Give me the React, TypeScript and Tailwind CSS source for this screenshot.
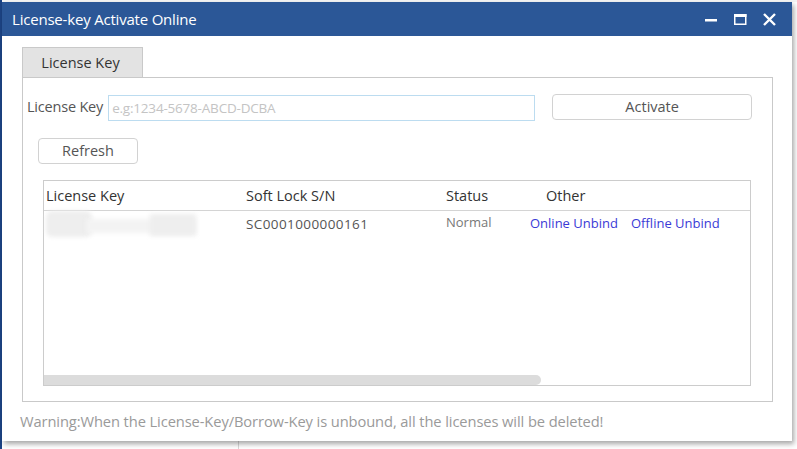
import React from 'react';

const FONT = { fontFamily: '"Open Sans", "Noto Sans", sans-serif' };

const COLUMNS = [
  { label: 'License Key', w: 'w-[200px]' },
  { label: 'Soft Lock S/N', w: 'w-[200px]' },
  { label: 'Status', w: 'w-[100px]' },
  { label: 'Other', w: 'w-[160px]' },
];

function TitleBar() {
  return (
    <div className="h-[34px] bg-[#2b5797] flex items-center justify-between pl-[10px] pr-[16px]">
      <span className="text-white text-[15px] tracking-[-0.2px]">License-key Activate Online</span>
      <div className="flex items-center gap-[16px]">
        <svg width="13" height="13" viewBox="0 0 13 13">
          <rect x="0" y="6" width="12" height="2.5" fill="#fff" />
        </svg>
        <svg width="13" height="13" viewBox="0 0 13 13">
          <rect x="0.75" y="1.75" width="11" height="9.5" fill="none" stroke="#fff" strokeWidth="1.5" />
          <rect x="0" y="1" width="12.5" height="3" fill="#fff" />
        </svg>
        <svg width="13" height="13" viewBox="0 0 13 13">
          <path d="M1 1 L12 12 M12 1 L1 12" stroke="#fff" strokeWidth="2.4" />
        </svg>
      </div>
    </div>
  );
}

function LicenseTable() {
  return (
    <div className="ml-[20px] mt-[16px] w-[708px] h-[206px] border border-[#cccccc] flex flex-col">
      <div className="h-[30px] flex items-center border-b border-[#d4d4d4] pl-[2px] text-[14.5px] text-[#333]">
        {COLUMNS.map(c => (
          <div key={c.label} className={c.w}>{c.label}</div>
        ))}
      </div>
      <div className="h-[26px] flex items-center pl-[2px] text-[13px]">
        <div className="w-[200px] h-[26px] relative">
          <div className="absolute left-[0px] top-[0px] w-[46px] h-[26px] bg-[#eeeeee] blur-[2px] rounded-[6px]" />
          <div className="absolute left-[40px] top-[8px] w-[110px] h-[14px] bg-[#f3f3f3] blur-[2px]" />
          <div className="absolute left-[104px] top-[3px] w-[46px] h-[22px] bg-[#eeeeee] blur-[2px]" />
        </div>
        <div className="w-[200px] text-[#555] text-[13.5px] tracking-[0.4px]">SC0001000000161</div>
        <div className="w-[84px] text-[#777] -mt-[3px]">Normal</div>
        <div className="w-[101px] text-[#3a3ad6]">Online Unbind</div>
        <div className="text-[#3a3ad6]">Offline Unbind</div>
      </div>
      <div className="flex-1" />
      <div className="h-[10px] w-[497px] bg-[#dcdcdc] rounded-r-[5px]" />
    </div>
  );
}

export default function App() {
  return (
    <div className="w-[797px] h-[449px] relative overflow-hidden bg-white" style={FONT}>
      {/* desktop behind */}
      <div className="absolute left-0 top-0 w-[2px] h-[449px] bg-[#1c4384]" />
      <div className="absolute left-[238px] top-0 w-px h-[449px] bg-[#d8d8d8]" />
      <div className="absolute left-[2px] top-0 w-[795px] h-[2px] bg-[#f4f4f4]" />

      {/* window */}
      <div className="absolute left-[2px] top-[2px] w-[790px] h-[439px] bg-white flex flex-col shadow-[2px_3px_5px_rgba(0,0,0,0.35)]">
        <TitleBar />
        <div className="flex flex-col pl-[20px]">
          <div className="mt-[11px] w-[121px] h-[30px] bg-[#e3e3e3] border border-[#c9c9c9] border-b-0 flex items-center justify-center text-[14.5px] text-[#333] pr-[4px]">
            License Key
          </div>
          <div className="w-[751px] h-[325px] border border-[#c9c9c9] flex flex-col">
            <div className="mt-[15px] flex items-center">
              <span className="ml-[4px] text-[14.5px] text-[#555] tracking-[-0.2px]">License Key</span>
              <div className="ml-[5px] mt-[2px] w-[427px] h-[26px] border border-[#bcdcf0] flex items-center pl-[3px] text-[13.5px] text-[#c4c4c4] tracking-[-0.2px]">
                e.g:1234-5678-ABCD-DCBA
              </div>
              <button className="ml-[17px] w-[200px] h-[26px] border border-[#d2d2d2] rounded-[4px] text-[14.5px] text-[#555] bg-white">
                Activate
              </button>
            </div>
            <button className="ml-[15px] mt-[17px] w-[100px] h-[26px] border border-[#d2d2d2] rounded-[4px] text-[14.5px] text-[#555] bg-white">
              Refresh
            </button>
            <LicenseTable />
          </div>
          <div className="mt-[8px] -ml-[2px] text-[14.7px] text-[#9a9a9a] tracking-[-0.1px]">
            Warning:When the License-Key/Borrow-Key is unbound, all the licenses will be deleted!
          </div>
        </div>
      </div>
    </div>
  );
}
